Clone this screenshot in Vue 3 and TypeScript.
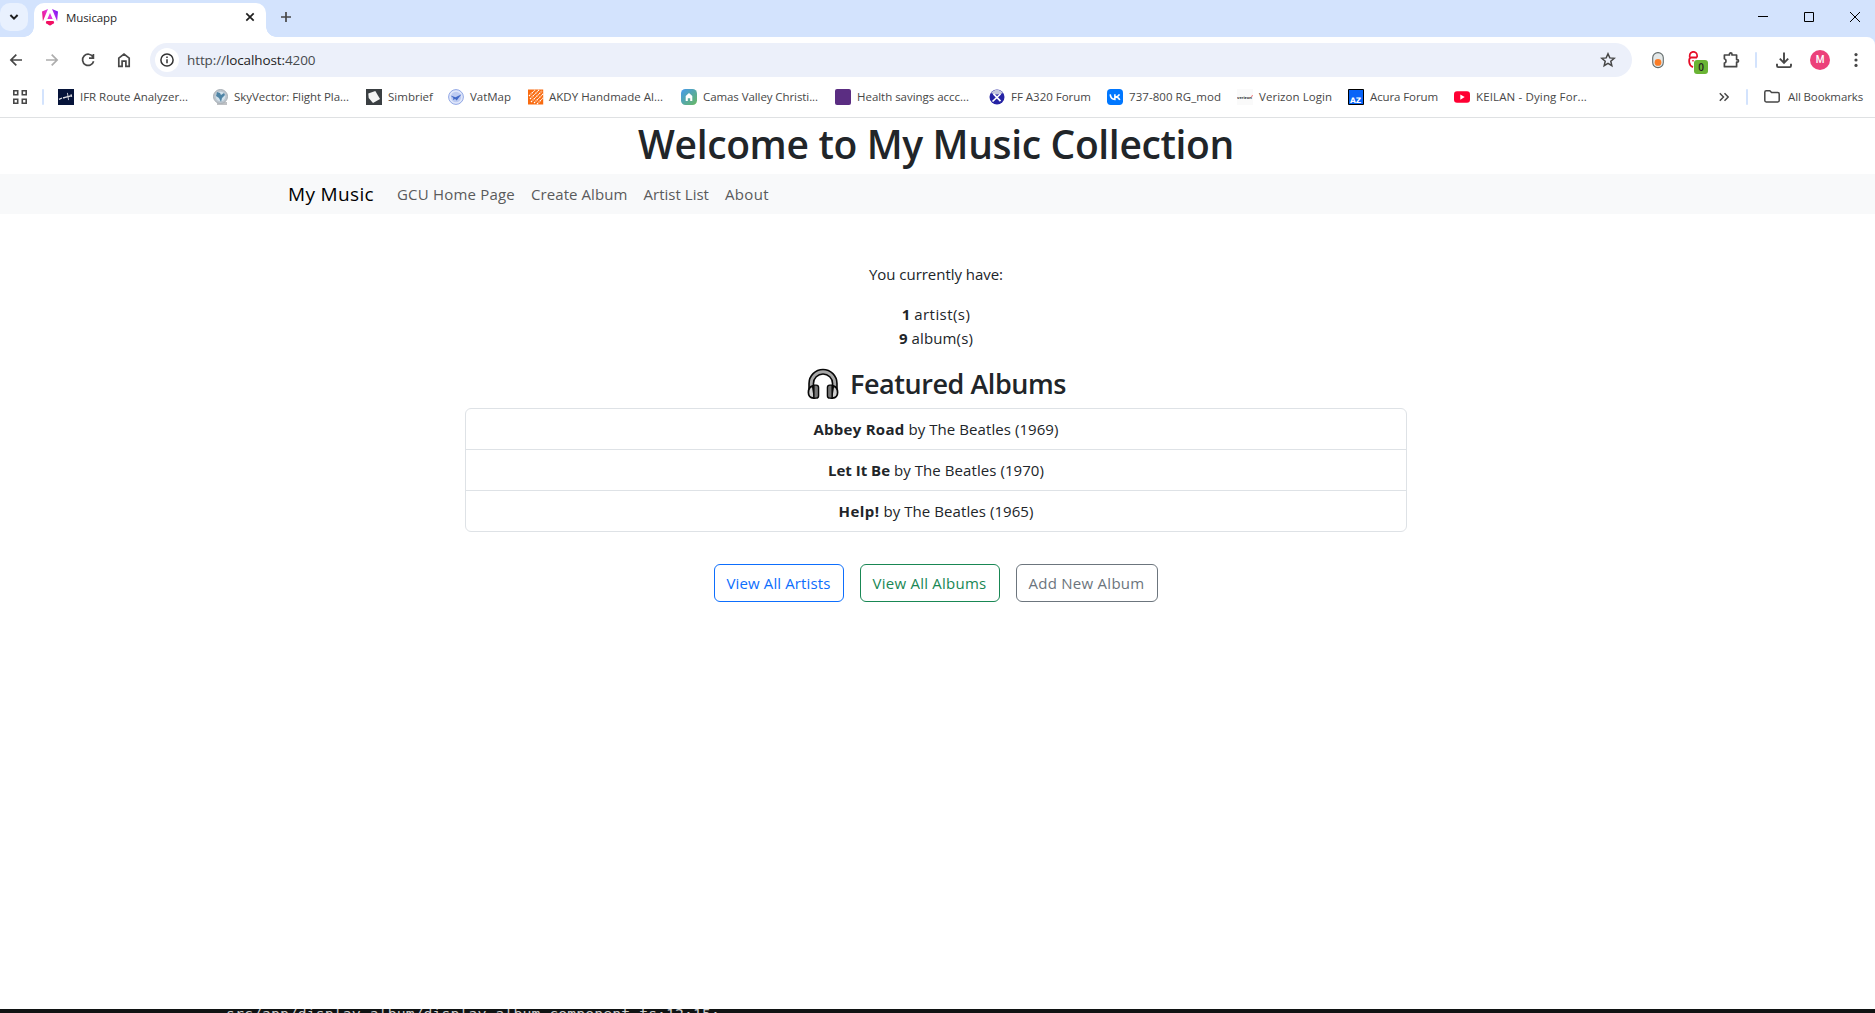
<script setup lang="ts">
import type { Directive } from 'vue'

interface Bookmark {
  icon: string
  label: string
  slot: number
  text: number
}

interface Album {
  title: string
  artist: string
  year: number
  titleWidth: number
  restWidth: number
}

// Spreads the letters of a label so that it takes the given width.
const vFit: Directive<HTMLElement, number> = {
  mounted(el, binding) {
    const length = (el.textContent ?? '').length
    const natural = el.getBoundingClientRect().width
    el.style.letterSpacing = `${(binding.value - natural) / length}px`
  },
}

const bookmarks: Bookmark[] = [
  { icon: 'plane', label: 'IFR Route Analyzer...', slot: 155, text: 108 },
  { icon: 'sky', label: 'SkyVector: Flight Pla...', slot: 153, text: 115 },
  { icon: 'simbrief', label: 'Simbrief', slot: 82, text: 45 },
  { icon: 'vatmap', label: 'VatMap', slot: 80, text: 41 },
  { icon: 'depot', label: 'AKDY Handmade Al...', slot: 153, text: 114 },
  { icon: 'camas', label: 'Camas Valley Christi...', slot: 154, text: 115 },
  { icon: 'health', label: 'Health savings accc...', slot: 154, text: 112 },
  { icon: 'xplane', label: 'FF A320 Forum', slot: 118, text: 80 },
  { icon: 'vk', label: '737-800 RG_mod', slot: 130, text: 92 },
  { icon: 'verizon', label: 'Verizon Login', slot: 111, text: 73 },
  { icon: 'acura', label: 'Acura Forum', slot: 106, text: 68 },
  { icon: 'youtube', label: 'KEILAN - Dying For...', slot: 150, text: 111 },
]

const links = [
  { label: 'GCU Home Page', width: 118 },
  { label: 'Create Album', width: 96.5 },
  { label: 'Artist List', width: 65.5 },
  { label: 'About', width: 44 },
]

const albums: Album[] = [
  { title: 'Abbey Road', artist: 'The Beatles', year: 1969, titleWidth: 91, restWidth: 154 },
  { title: 'Let It Be', artist: 'The Beatles', year: 1970, titleWidth: 62, restWidth: 154 },
  { title: 'Help!', artist: 'The Beatles', year: 1965, titleWidth: 41, restWidth: 154 },
]
</script>

<template>
  <div class="window">
    <div class="tabstrip">
      <button class="tab-search">
        <svg width="10" height="8" viewBox="0 0 10 8"><path d="M1.4 2 5 5.6 8.6 2" fill="none" stroke="#1f1f1f" stroke-width="2" /></svg>
      </button>
      <div class="tab">
        <svg class="angular" width="16" height="17" viewBox="0 0 16 17">
          <defs>
            <linearGradient id="ng" x1="0" y1=".7" x2="1" y2=".2">
              <stop offset="0" stop-color="#f0116b" /><stop offset=".5" stop-color="#e435e0" /><stop offset="1" stop-color="#7a18f5" />
            </linearGradient>
          </defs>
          <path d="M10 0 16 2.6 15.1 12.2zM6 0 0 2.6 .9 12.2zM12.2 14 8 16.6 3.8 14 4.7 12h6.6zM8 4.1 10.6 10H5.4z" fill="url(#ng)" />
          <path d="M12.2 14 8 16.6 3.8 14 4.7 12h6.6z" fill="#f2115f" />
        </svg>
        <span v-fit="51" class="tab-title">Musicapp</span>
        <svg class="tab-close" width="10" height="10" viewBox="0 0 10 10"><path d="m1.3 1.3 7.4 7.4m0-7.4L1.3 8.7" stroke="#1f1f1f" stroke-width="1.7" /></svg>
      </div>
      <svg class="new-tab" width="12" height="12" viewBox="0 0 12 12"><path d="M6 1v10M1 6h10" stroke="#474747" stroke-width="1.7" /></svg>
      <div class="controls">
        <svg width="10" height="10" viewBox="0 0 10 10"><path d="M0 4.5h10" stroke="#000" /></svg>
        <svg width="10" height="10" viewBox="0 0 10 10"><path d="M.5.5h9v9h-9z" fill="none" stroke="#000" /></svg>
        <svg width="10" height="10" viewBox="0 0 10 10"><path d="m0 0 10 10m0-10L0 10" stroke="#000" /></svg>
      </div>
    </div>

    <div class="toolbar">
      <svg class="nav-icon" viewBox="0 0 16 16"><path d="M14 8H3M8.3 2.6 2.9 8l5.4 5.4" /></svg>
      <svg class="nav-icon off" viewBox="0 0 16 16"><path d="M2 8h11M7.7 2.6 13.1 8l-5.4 5.4" /></svg>
      <svg class="nav-icon" viewBox="0 0 16 16"><path d="M13 5A5.6 5.6 0 1 0 13.6 9.2M13.4 2v4.2H9" /></svg>
      <svg class="nav-icon" viewBox="0 0 16 16"><path d="M2.8 6.2 8 2l5.2 4.2v8.1H9.9V9.2H6.1v5.1H2.8z" /></svg>
      <div class="address">
        <span class="info">
          <svg width="14" height="14" viewBox="0 0 14 14"><circle cx="7" cy="7" r="6.1" fill="none" stroke="#333" stroke-width="1.5" /><path d="M7 6.2v4M7 3.5v1.5" stroke="#333" stroke-width="1.5" /></svg>
        </span>
        <span v-fit="128.5" class="url">http://<b>localhost:</b>4200</span>
        <svg class="star" width="16" height="16" viewBox="0 0 16 16"><path d="m8 1.8 1.8 4.1 4.4.4-3.4 2.9 1 4.4L8 11.3l-3.8 2.3 1-4.4-3.4-2.9 4.4-.4z" fill="none" stroke="#474747" stroke-width="1.5" /></svg>
      </div>
      <div class="tools">
        <svg class="toggle" width="14" height="18" viewBox="0 0 14 18"><rect x="1.7" y="1.6" width="10.6" height="15" rx="5.2" fill="#e4e8e8" stroke="#626b6b" stroke-width="1.1" /><circle cx="7" cy="11.4" r="3.4" fill="#fb7d27" /></svg>
        <span class="blocker">
          <svg width="16" height="18" viewBox="0 0 16 18"><path d="M4.7 6.4V4.5a3.7 3.7 0 0 1 7.4 0v2" fill="none" stroke="#e50d28" stroke-width="1.7" /><path d="M12 6.5H6.2Q3.8 7 4.2 11q.4 4 3.8 5.2" fill="none" stroke="#e50d28" stroke-width="1.8" /><path d="M7 9.800h2" stroke="#e50d28" /></svg>
          <i>0</i>
        </span>
        <svg class="puzzle" width="18" height="18" viewBox="0 0 18 18"><path d="M2.400 4h5V3.200a1.200 1.200 0 0 1 2.600 0V4h4.600v4.600h.6a1.200 1.200 0 0 1 0 2.600h-.6v4.500H2.400v-3.600a2.300 2.300 0 0 0 0-4.400z" fill="none" stroke="#474747" stroke-width="1.700" stroke-linejoin="round" /></svg>
        <i class="divider"></i>
        <svg class="download" width="16" height="17" viewBox="0 0 16 17"><path d="M8 .5v10M3.8 6.6 8 10.800l4.200-4.200M1 11.700v2.100q0 1.300 1.300 1.300h11.400q1.300 0 1.300-1.300v-2.100" fill="none" stroke="#474747" stroke-width="1.900" /></svg>
        <span class="avatar">M</span>
        <svg class="menu" width="4" height="16" viewBox="0 0 4 16"><circle cx="2" cy="2.6" r="1.6" /><circle cx="2" cy="8" r="1.6" /><circle cx="2" cy="13.4" r="1.6" /></svg>
      </div>
    </div>

    <div class="bookmarks">
      <svg class="apps" width="14" height="14" viewBox="0 0 14 14"><path d="M.8.8h3.900v3.900H.8zM9.300.8h3.900v3.900H9.300zM.8 9.300h3.900v3.900H.8zM9.300 9.300h3.900v3.900H9.300z" fill="none" stroke="#474747" stroke-width="1.600" /></svg>
      <i class="divider"></i>
      <div class="marks">
        <div v-for="mark in bookmarks" :key="mark.label" class="mark" :style="{ width: mark.slot + 'px' }">
          <svg width="16" height="16" viewBox="0 0 16 16">
            <g v-if="mark.icon === 'plane'"><path d="M0 0h16v16H0z" fill="#06143a" /><path d="m1 10.300 3-1.300M5 8.800l9-2.200" stroke="#e4e4e8" stroke-width="1.300" /><path d="m9.400 3.900 1.200 7.200M13 5l.7 3M5.500 8l.5 1.500" stroke="#d4d4da" stroke-width=".9" /></g>
            <g v-else-if="mark.icon === 'sky'"><path d="M4 13h10v3H4z" fill="#bfc1c4" /><circle cx="7.5" cy="7.5" r="7" fill="#bcc6cf" stroke="#a9afb5" /><circle cx="7.5" cy="7.5" r="4.8" fill="#d3e2ec" /><path d="m4 3 3 1 1 2 3-2 1 2-3 3-1 4-2-4-3-2z" fill="#4f84a5" /></g>
            <g v-else-if="mark.icon === 'simbrief'"><path d="M0 0h16v16H0z" fill="#3a3f42" /><path d="m2.300 4.600 7-2.500L14 10l-7 4-4.300-5z" fill="#f3f4f4" /></g>
            <g v-else-if="mark.icon === 'vatmap'"><circle cx="8" cy="8" r="7.4" fill="#e0e7fa" stroke="#91a7e5" /><circle cx="8" cy="8" r="5.2" fill="#bdcbf1" /><path d="m2.500 6.500 5 1.700 6-3-4.800 6.200-1.600-1.300-2 .8.2-2z" fill="#4269c8" /></g>
            <g v-else-if="mark.icon === 'depot'"><path d="M0 .5h15.200v15H0z" fill="#f96b10" /><path d="m1 7 6-6M2 10l9-9M3 13 14 2M6 14l9-9M9 15l6-6" stroke="#fff" stroke-width="1.200" stroke-dasharray="1.600 .7 .9 .6" /></g>
            <g v-else-if="mark.icon === 'camas'"><defs><linearGradient id="cv" x2="1" y2="1"><stop stop-color="#4398ef" /><stop offset="1" stop-color="#69b960" /></linearGradient></defs><rect width="16" height="16" rx="4.5" fill="url(#cv)" /><path d="M4.700 7.100 8 4l3.300 3.100V12H9.200V9.200H6.800V12H4.700z" fill="#fff" /></g>
            <rect v-else-if="mark.icon === 'health'" width="16" height="16" rx="2" fill="#5b2d82" />
            <g v-else-if="mark.icon === 'xplane'"><circle cx="8" cy="8" r="7.5" fill="#2523a4" /><path d="M2 4a7.200 7.200 0 0 1 12 0Q8 7 2 4" fill="#c4c7dd" /><path d="m4.500 4.800 7 7.400M11.500 5l-8 7.500" stroke="#fff" stroke-width="1.700" /></g>
            <g v-else-if="mark.icon === 'vk'"><rect width="16" height="16" rx="3.7" fill="#07f" /><path d="M3.200 5.400q.5 5 4.700 5V5.300M12.500 5.400Q11 8 8 8q3.300 0 4.800 2.800" fill="none" stroke="#fff" stroke-width="1.600" /></g>
            <g v-else-if="mark.icon === 'verizon'"><path d="M0 0h16v16H0z" fill="#fafafa" /><text x=".1" y="9.8" class="verizon">verizon</text><path d="m14.300 8.500 1.200-2.400" stroke="#e33" stroke-width=".7" /></g>
            <g v-else-if="mark.icon === 'acura'"><path d="M.5.5h15v15H.5z" fill="#0864f8" stroke="#000" /><text x="2" y="14" class="az">AZ</text></g>
            <g v-else><rect y="2.3" width="16" height="11.5" rx="3" fill="#ff0033" /><path d="m6.300 5.500 4.400 2.600-4.400 2.600z" fill="#fff" /></g>
          </svg>
          <span v-fit="mark.text">{{ mark.label }}</span>
        </div>
      </div>
      <svg class="more" width="10" height="10" viewBox="0 0 10 10"><path d="m.8 1.200 3.700 3.800L.8 8.800m4.700-7.600L9.200 5 5.500 8.800" fill="none" stroke="#474747" stroke-width="1.500" /></svg>
      <i class="divider"></i>
      <svg class="folder" width="16" height="13" viewBox="0 0 16 13"><path d="M.8 10.600V2.200Q.8.8 2.200.8h3.600l1.800 1.800h6.200q1.400 0 1.400 1.400v6.600q0 1.400-1.400 1.400H2.200Q.8 12 .8 10.600z" fill="none" stroke="#474747" stroke-width="1.500" /></svg>
      <span v-fit="75">All Bookmarks</span>
    </div>

    <main class="page">
      <h1><span v-fit="596">Welcome to My Music Collection</span></h1>
      <nav class="navbar">
        <a class="brand"><span v-fit="86">My Music</span></a>
        <a v-for="link in links" :key="link.label"><span v-fit="link.width">{{ link.label }}</span></a>
      </nav>
      <section class="home">
        <p><span v-fit="134">You currently have:</span></p>
        <ul class="stats">
          <li><strong>1</strong><span v-fit="56" class="unit">artist(s)</span></li>
          <li><strong>9</strong><span v-fit="61.5" class="unit">album(s)</span></li>
        </ul>
        <h3>
          <svg width="32" height="32" viewBox="0 0 34 34">
            <path d="M4.500 23v-6.500a12.500 12.500 0 0 1 25 0V23" fill="none" stroke="#080808" stroke-width="6.400" />
            <path d="M4.500 22v-5.500a12.500 12.500 0 0 1 25 0V22" fill="none" stroke="#a8a8a8" stroke-width="3" />
            <path d="M6 19q-4.500 1.500-4.500 7T7 32h1zM28 19q4.500 1.500 4.500 7T27 32h-1z" fill="#cfcfcf" stroke="#080808" stroke-width="1.800" />
            <path d="M7.300 18.200h2.500q2.500 0 2.500 2.600v8.600q0 2.600-2.500 2.600H7.300zM26.700 18.200h-2.500q-2.500 0-2.500 2.600v8.600q0 2.600 2.500 2.600h2.500z" fill="#777" stroke="#080808" stroke-width="1.500" />
          </svg>
          <span v-fit="216">Featured Albums</span>
        </h3>
        <ul class="albums">
          <li v-for="album in albums" :key="album.title">
            <strong v-fit="album.titleWidth">{{ album.title }}</strong><span v-fit="album.restWidth">&nbsp;by {{ album.artist }} ({{ album.year }})</span>
          </li>
        </ul>
        <div class="actions">
          <button class="primary"><span v-fit="104">View All Artists</span></button>
          <button class="success"><span v-fit="114">View All Albums</span></button>
          <button class="secondary"><span v-fit="116">Add New Album</span></button>
        </div>
      </section>
    </main>
    <footer class="terminal"><span v-fit="494">src/app/display-album/display-album.component.ts:12:15:</span></footer>
  </div>
</template>

<style>
body {
  margin: 0;
  overflow: hidden;
}
</style>

<style scoped>
* {
  box-sizing: border-box;
}
.window {
  display: flex;
  flex-direction: column;
  width: 1875px;
  height: 1013px;
  overflow: hidden;
  background: #fff;
  color: #212529;
  font-family: "Open Sans", "Noto Sans", sans-serif;
}
span,
strong {
  white-space: nowrap;
}
svg {
  display: block;
  flex: none;
}
button {
  font: inherit;
  background: none;
}
.tabstrip {
  display: flex;
  flex: none;
  height: 37px;
  padding-top: 3px;
  background: #d3e3fd;
}
.tab-search {
  display: flex;
  align-items: center;
  justify-content: center;
  width: 28px;
  height: 28px;
  padding: 0;
  border: 0;
  border-radius: 10px;
  background: #e9f1fe;
}
.tab {
  position: relative;
  display: flex;
  align-items: center;
  width: 232px;
  height: 34px;
  margin-left: 6px;
  padding: 0 12px 6px 8px;
  border-radius: 10px 10px 0 0;
  background: #fff;
}
.tab::before,
.tab::after {
  content: "";
  position: absolute;
  bottom: 0;
  width: 10px;
  height: 10px;
}
.tab::before {
  left: -10px;
  background: radial-gradient(circle at 0 0, transparent 9.5px, #fff 10px);
}
.tab::after {
  right: -10px;
  background: radial-gradient(circle at 100% 0, transparent 9.5px, #fff 10px);
}
.tab-title {
  margin-left: 8px;
  color: #1f1f1f;
  font-size: 11.5px;
}
.tab-close {
  margin-left: auto;
  margin-right: -1px;
}
.new-tab {
  margin: 8px 0 0 14px;
}
.controls {
  display: flex;
  gap: 36px;
  margin: 9px 15px 0 auto;
}
.toolbar {
  display: flex;
  flex: none;
  align-items: center;
  height: 46px;
  padding-left: 8px;
  border-top-right-radius: 8px;
  background: #fff;
  box-shadow: 8px -8px 0 #d3e3fd;
  clip-path: inset(0);
}
.nav-icon {
  width: 16px;
  height: 16px;
  margin-right: 20px;
  fill: none;
  stroke: #474747;
  stroke-width: 1.7;
}
.nav-icon.off {
  stroke: #adadad;
}
.nav-icon:nth-child(4) {
  margin-right: 18px;
}
.address {
  display: flex;
  flex: none;
  align-items: center;
  width: 1482px;
  height: 34px;
  padding: 0 16px 0 5px;
  border-radius: 17px;
  background: #ecf0fa;
}
.info {
  display: flex;
  align-items: center;
  justify-content: center;
  width: 24px;
  height: 24px;
  border-radius: 50%;
  background: #fff;
}
.url {
  margin-left: 8px;
  color: #474a4d;
  font-size: 13.5px;
}
.url b {
  color: #1f1f1f;
  font-weight: 400;
}
.star {
  margin-left: auto;
}
.tools {
  display: flex;
  flex: 1;
  align-items: center;
}
.toggle {
  margin-left: 19px;
}
.blocker {
  position: relative;
  margin-left: 20px;
}
.blocker i {
  position: absolute;
  left: 9px;
  top: 9px;
  width: 14px;
  height: 14px;
  border-radius: 3px;
  background: #6ab434;
  color: #222;
  font: 600 10px/14px "Open Sans", sans-serif;
  text-align: center;
}
.puzzle {
  margin-left: 21px;
}
.divider {
  flex: none;
  width: 2px;
  height: 16px;
  border-radius: 1px;
  background: #d3e3fd;
}
.tools .divider {
  margin-left: 15px;
}
.download {
  margin-left: 19px;
}
.avatar {
  width: 20px;
  height: 20px;
  margin-left: 18px;
  border-radius: 50%;
  background: #ec407a;
  color: #fff;
  font: 500 10px/20px Roboto, sans-serif;
  text-align: center;
}
.menu {
  margin-left: 24px;
  fill: #474747;
}
.bookmarks {
  display: flex;
  flex: none;
  align-items: center;
  height: 35px;
  padding: 0 12px 7px 13px;
  border-bottom: 1px solid #dfe1e3;
  color: #474747;
  font-size: 11.5px;
}
.bookmarks span {
  line-height: 16px;
}
.apps {
  margin-right: 15px;
}
.marks {
  display: flex;
  flex: 1;
  margin-left: 14px;
}
.mark {
  display: flex;
  flex: none;
  align-items: center;
  gap: 6px;
}
.mark:nth-child(2),
.mark:nth-child(5) {
  gap: 5px;
}
.verizon {
  font: bold 4.2px "Liberation Sans", sans-serif;
  fill: #222;
}
.az {
  font: bold 7.5px "DejaVu Sans", sans-serif;
  fill: #fff;
}
.more {
  margin-right: 17px;
}
.folder {
  margin: 0 8px 0 16px;
}
.page {
  flex: 1;
  font-size: 15px;
  line-height: 24px;
}
h1 {
  height: 48px;
  margin: 0 0 8px;
  padding-right: 3px;
  font-size: 39px;
  font-weight: 600;
  line-height: 51px;
  text-align: center;
}
.navbar {
  display: flex;
  align-items: center;
  height: 40px;
  padding-left: 288px;
  background: #f8f9fa;
}
.navbar a {
  margin-right: 16px;
  color: #5a5b5c;
}
.navbar .brand {
  margin-right: 23px;
  color: #000;
  font-size: 19px;
}
.home {
  display: flex;
  flex-direction: column;
  align-items: center;
  width: 942px;
  margin: 48px auto 0 465px;
}
p {
  margin: 0 0 16px;
}
ul {
  margin: 0;
  padding: 0;
  list-style: none;
}
.stats {
  margin-bottom: 16px;
  text-align: center;
}
.unit {
  margin-left: 4px;
}
h3 {
  display: flex;
  align-items: center;
  gap: 11px;
  height: 34px;
  margin: 0 0 8px;
  padding: 2px 0 0 1px;
  font-size: 27px;
  font-weight: 600;
}
.albums {
  width: 942px;
  border: 1px solid #dee2e6;
  border-radius: 6px;
  text-align: center;
}
.albums li {
  padding: 8px 16px;
}
.albums li + li {
  border-top: 1px solid #dee2e6;
}
.actions {
  display: flex;
  gap: 16px;
  margin: 32px 1px 0 0;
}
.actions button {
  height: 38px;
  padding: 0 12px;
  border: 1px solid;
  border-radius: 6px;
}
.primary {
  color: #0d6efd;
}
.success {
  color: #198754;
}
.secondary {
  color: #6c757d;
}
.terminal {
  display: flex;
  flex: none;
  align-items: flex-start;
  height: 4px;
  padding-left: 226px;
  overflow: hidden;
  background: #101313;
  color: #ccc;
  font: 14.8px/16px "DejaVu Sans Mono", monospace;
}
.terminal span {
  margin-top: -3px;
}
</style>
